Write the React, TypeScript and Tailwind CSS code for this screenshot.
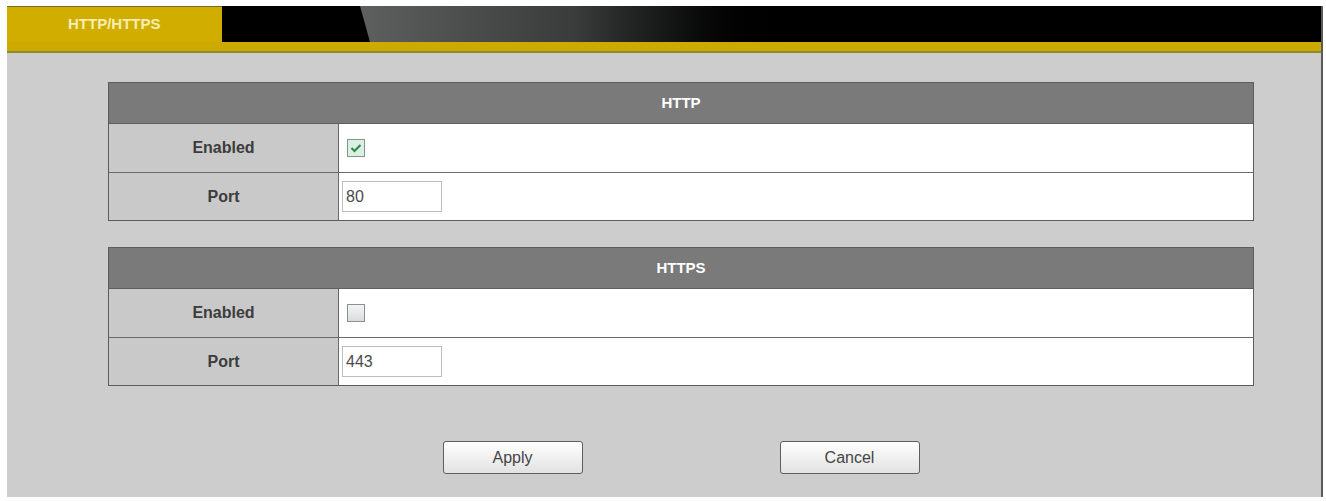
import React from "react";

function Section({ title, checked, port }: { title: string; checked: boolean; port: string }) {
  return (
    <div className="w-[1146px] border border-[#5c5c5c]">
      <div className="flex h-[40px] items-center justify-center bg-[#7a7a7a] text-[15px] font-bold text-white">
        {title}
      </div>
      <div className="grid grid-cols-[230px_1fr] border-t border-[#5f5f5f]">
        <div className="flex h-[48px] items-center justify-center border-r border-[#666] bg-[#c9c9c9] text-[16px] font-bold text-[#3c3c3c]">
          Enabled
        </div>
        <div className="flex h-[48px] items-center bg-white pl-[8px]">
          <span
            className={
              checked
                ? "flex h-[18px] w-[18px] items-center justify-center border border-[#7f9585] bg-[#dcefe3]"
                : "h-[18px] w-[18px] border border-[#8a8f92] bg-gradient-to-b from-[#f4f4f4] to-[#d9dde0]"
            }
          >
            {checked && (
              <svg width="12" height="10" viewBox="0 0 12 10">
                <path d="M1.5 5 L4.5 8 L10.5 2" fill="none" stroke="#2f8a4d" strokeWidth="2.2" />
              </svg>
            )}
          </span>
        </div>
        <div className="flex h-[48px] items-center justify-center border-r border-t border-[#6a6a6a] bg-[#c9c9c9] text-[16px] font-bold text-[#3c3c3c]">
          Port
        </div>
        <div className="flex h-[48px] items-center border-t border-[#6a6a6a] bg-white pl-[3px]">
          <div className="flex h-[31px] w-[100px] items-center border border-[#bdbdbd] bg-white pl-[3px] text-[16px] text-[#4a4a4a]">
            {port}
          </div>
        </div>
      </div>
    </div>
  );
}

export default function App() {
  return (
    <div className="h-[501px] w-[1326px] bg-white pb-[4px] pl-[7px] pr-[3px] pt-[6px] font-['Liberation_Sans',Arial,sans-serif]">
      <div className="flex h-full flex-col border-r-2 border-[#5a5a5a] bg-[#cdcdcd]">
        {/* Top tab bar */}
        <div className="flex h-[36px]">
          <div className="flex w-[215px] items-center border-t border-[#7a6a2a] bg-[#d1ad00] pl-[61px] text-[15px] font-bold text-[#f6edb0]">
            HTTP/HTTPS
          </div>
          <div className="flex flex-1 bg-black">
            <div className="ml-[138px] h-full w-[430px] bg-gradient-to-r from-[#5e6060] via-[#3a3b3b] to-black [clip-path:polygon(0_0,100%_0,100%_100%,10px_100%)]" />
          </div>
        </div>
        <div className="h-[11px] border-b-2 border-[#8f8a2e] bg-[#ccaa00]" />

        {/* Content */}
        <div className="flex flex-col pl-[101px] pt-[29px]">
          <Section title="HTTP" checked={true} port="80" />
          <div className="h-[26px]" />
          <Section title="HTTPS" checked={false} port="443" />
          <div className="flex w-[1146px] justify-center gap-[197px] pt-[55px]">
            <button className="h-[33px] w-[140px] rounded-[3px] border border-[#5e5e5e] bg-gradient-to-b from-white to-[#e2e2e2] text-[16px] text-[#444]">
              Apply
            </button>
            <button className="h-[33px] w-[140px] rounded-[3px] border border-[#5e5e5e] bg-gradient-to-b from-white to-[#e2e2e2] text-[16px] text-[#444]">
              Cancel
            </button>
          </div>
        </div>
      </div>
    </div>
  );
}
